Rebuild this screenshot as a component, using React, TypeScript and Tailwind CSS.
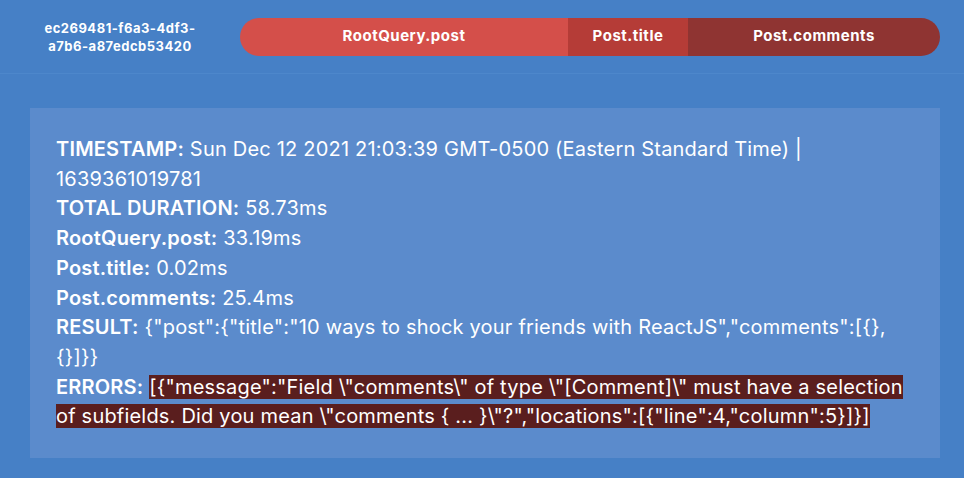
const SEGMENTS = [
  { name: 'RootQuery.post', width: 328, color: '#d44f4a' },
  { name: 'Post.title', width: 120, color: '#b53c37' },
  { name: 'Post.comments', width: 252, color: '#8f3432' },
]

export default function App() {
  return (
    <div
      className="w-[964px] h-[478px] bg-[#4680c6] text-white overflow-hidden"
      style={{ fontFamily: 'Inter, "Noto Sans", sans-serif' }}
    >
      <div className="flex items-center h-[74px] border-b border-[#4d87cb]">
        <div className="w-[240px] pt-[1px] text-center text-[13px] font-bold leading-[18px] tracking-[0.5px]">
          ec269481-f6a3-4df3-
          <br />
          a7b6-a87edcb53420
        </div>
        <div className="flex h-[38px] w-[700px] rounded-full overflow-hidden">
          {SEGMENTS.map((s) => (
            <div
              key={s.name}
              className="flex items-center justify-center text-[15px] font-bold tracking-[0.5px]"
              style={{ width: s.width, backgroundColor: s.color }}
            >
              {s.name}
            </div>
          ))}
        </div>
      </div>

      <div className="ml-[30px] mr-[24px] mt-[34px] h-[350px] bg-[#5b8bcc] px-[26px] pt-[27px] text-[20px] leading-[29.7px] tracking-[0.2px]">
        <div className="w-[858px]">
          <b className="font-semibold">TIMESTAMP:</b> Sun Dec 12 2021 21:03:39 GMT-0500 (Eastern Standard Time) | 1639361019781
          <br />
          <b className="font-semibold">TOTAL DURATION:</b> 58.73ms
          <br />
          <b className="font-semibold">RootQuery.post:</b> 33.19ms
          <br />
          <b className="font-semibold">Post.title:</b> 0.02ms
          <br />
          <b className="font-semibold">Post.comments:</b> 25.4ms
          <br />
          <b className="font-semibold">RESULT:</b> {'{"post":{"title":"10 ways to shock your friends with ReactJS","comments":[{},{}]}}'}
          <br />
          <b className="font-semibold">ERRORS:</b>{' '}
          <span className="bg-[#5a1e1e]">
            {'[{"message":"Field \\"comments\\" of type \\"[Comment]\\" must have a selection of subfields. Did you mean \\"comments { ... }\\"?","locations":[{"line":4,"column":5}]}]'}
          </span>
        </div>
      </div>
    </div>
  )
}
